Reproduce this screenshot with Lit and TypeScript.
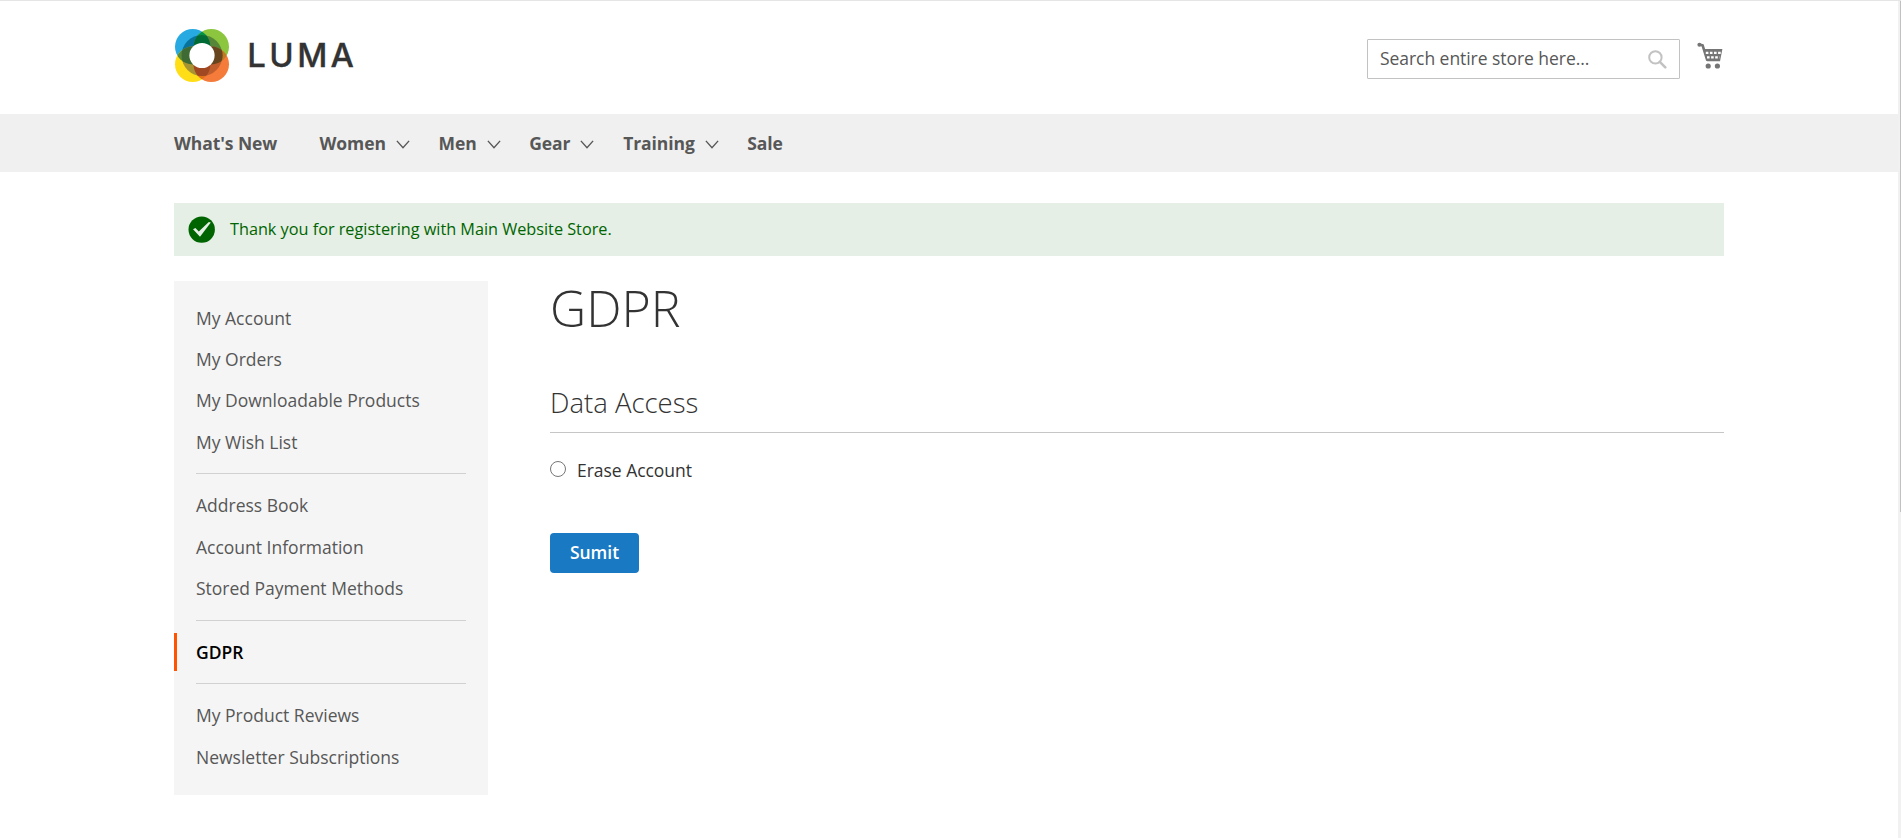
import { LitElement, html, css, svg } from "lit";
import { customElement } from "lit/decorators.js";

const NAV = [
  { label: "What's New", menu: false, width: 145.5 },
  { label: "Women", menu: true, width: 119 },
  { label: "Men", menu: true, width: 90.7 },
  { label: "Gear", menu: true, width: 94 },
  { label: "Training", menu: true, width: 124 },
  { label: "Sale", menu: false, width: 60 },
];

const ACCOUNT = [
  ["My Account", "My Orders", "My Downloadable Products", "My Wish List"],
  ["Address Book", "Account Information", "Stored Payment Methods"],
  ["GDPR"],
  ["My Product Reviews", "Newsletter Subscriptions"],
];

@customElement("app-root")
export class AppRoot extends LitElement {
  static styles = css`
    :host {
      display: block;
      position: relative;
      height: 838px;
      overflow: hidden;
      box-sizing: border-box;
      border-top: 1px solid #e5e5e5;
      background: #fff;
      color: #333;
      font: 400 17.5px/25px "Open Sans", "Noto Sans", sans-serif;
    }
    * { box-sizing: border-box; }
    ul { list-style: none; margin: 0; padding: 0; }
    .wrap { width: 1550px; margin-left: 174px; }
    .header { display: flex; height: 113px; }
    .logo { display: block; margin-top: 27px; }
    .wordmark { font: 500 33px "Inter", sans-serif; fill: #333; stroke: #333; stroke-width: 0.3px; }
    .tools { display: flex; margin-left: auto; }
    .search {
      display: flex; align-items: center; justify-content: space-between;
      width: 313px; height: 40px; margin-top: 38px; padding: 0 12px 0 12px;
      border: 1px solid #c2c2c2; border-radius: 1px; color: #575757;
    }
    .search span { margin-top: -2px; letter-spacing: -0.05px; }
    .cart { margin: 41px 0 0 17px; }
    .nav { height: 58px; background: #f0f0f0; }
    .links { display: flex; align-items: center; height: 58px; font-weight: 700; color: #575757; letter-spacing: -0.08px; }
    .link { display: flex; align-items: center; }
    .chev { margin: 2px 0 0 10px; }
    .message {
      display: flex; align-items: center; height: 53px; margin-top: 31px; padding-left: 14px;
      background: #e5efe5; color: #006400; font-size: 16.25px;
    }
    .message span { margin: -1px 0 0 15px; letter-spacing: -0.01px; }
    .columns { display: flex; gap: 62px; margin-top: 25px; align-items: flex-start; }
    .side { width: 314px; height: 514px; padding: 18.7px 0; background: #f5f5f5; color: #575757; }
    .item { height: 37.5px; padding: 6.25px 22px 6.25px 19px; border-left: 3px solid transparent; }
    .item + .item { margin-top: 3.75px; }
    .current { border-color: #ff5501; color: #000; font-weight: 600; }
    .rule { height: 1px; margin: 12.45px 22px 12.8px; background: #d1d1d1; }
    .main { flex: 1; }
    h1 { margin: 0; font-size: 50px; line-height: 55px; font-weight: 300; }
    h2 {
      margin: 48px 0 0; height: 49px; border-bottom: 1px solid #c6c6c6;
      font-size: 27.5px; line-height: 38px; font-weight: 300;
    }
    .choice { display: flex; margin-top: 25px; letter-spacing: -0.03px; }
    .choice input { width: 16px; height: 16px; margin: 3px 11px 0 0; }
    .btn {
      display: block; width: 89px; height: 40px; margin-top: 50px; padding: 0 0 2px; border: 0;
      border-radius: 4px; background: #1979c3; color: #fff;
      font: 600 17.5px/38px "Open Sans", sans-serif;
    }
    .track { position: absolute; right: 0; top: 0; width: 3px; height: 837px; background: #f1f1f1; }
    .thumb { width: 1px; height: 511px; margin-left: 2px; background: #c1c1c1; }
  `;

  private logo() {
    return html`<svg class="logo" width="190" height="56" viewBox="174 28 190 56" aria-label="LUMA">
      <defs>
        <clipPath id="tl"><circle cx="192.7" cy="46.7" r="17.7" /></clipPath>
        <clipPath id="br"><circle cx="211.3" cy="64.3" r="17.7" /></clipPath>
        <clipPath id="ring"><circle cx="202" cy="55.5" r="20.5" /></clipPath>
      </defs>
      ${this.petals("#27a9e1", "#8bc63e", "#ffde17", "#f47b39", "#009245", "#5a8a35", "#c07a20", "#e0701a")}
      <g clip-path="url(#ring)">
        ${this.petals("#07739b", "#568638", "#a89333", "#c15e2d", "#006b35", "#3d6b33", "#67451e", "#9f4822")}
      </g>
      <circle cx="202" cy="55.5" r="12.6" fill="#fff" />
      <text class="wordmark" y="66.8" x="247.2 269.2 297.2 330.4">LUMA</text>
    </svg>`;
  }

  private petals(tl: string, tr: string, bl: string, br: string, top: string, left: string, right: string, bottom: string) {
    return svg`
      <circle cx="192.7" cy="46.7" r="17.7" fill=${tl} />
      <circle cx="211.3" cy="46.7" r="17.7" fill=${tr} />
      <circle cx="192.7" cy="64.3" r="17.7" fill=${bl} />
      <circle cx="211.3" cy="64.3" r="17.7" fill=${br} />
      <g clip-path="url(#tl)">
        <circle cx="211.3" cy="46.7" r="17.7" fill=${top} />
        <circle cx="192.7" cy="64.3" r="17.7" fill=${left} />
      </g>
      <g clip-path="url(#br)">
        <circle cx="211.3" cy="46.7" r="17.7" fill=${right} />
        <circle cx="192.7" cy="64.3" r="17.7" fill=${bottom} />
      </g>`;
  }

  render() {
    return html`
      <header class="wrap header">
        ${this.logo()}
        <div class="tools">
          <div class="search">
            <span>Search entire store here...</span>
            <svg width="19" height="19" viewBox="0 0 19 19" fill="none" stroke="#c2c2c2">
              <circle cx="7.4" cy="7.4" r="6.2" stroke-width="2" />
              <path d="M11.8 11.8 17.3 17.3" stroke-width="2.6" stroke-linecap="round" />
            </svg>
          </div>
          <svg class="cart" width="27" height="28" viewBox="0 0 27 28" fill="none" stroke="#757575">
            <circle cx="2.4" cy="2.8" r="2" fill="#757575" stroke="none" />
            <path d="M2.4 2.6 5.6 3.4 10.4 18.6" stroke-width="2.6" />
            <path d="M6.4 7H25.4L23 19.3H10Z" fill="#757575" stroke="none" />
            <path d="M8.8 10.9H23.8M10 15.4H22.6" stroke="#fff" stroke-width="2.4" stroke-dasharray="2.6 1.5" />
            <circle cx="11.2" cy="24" r="2.6" fill="#757575" stroke="none" />
            <circle cx="20.4" cy="24" r="2.6" fill="#757575" stroke="none" />
          </svg>
        </div>
      </header>
      <nav class="nav">
        <div class="wrap links">
          ${NAV.map((n) => html`<div class="link" style="width:${n.width}px">
            ${n.label}
            ${n.menu ? html`<svg class="chev" width="15" height="9" viewBox="0 0 15 9" fill="none" stroke="#575757" stroke-width="1.4"><path d="M.9 .9 7 7.6 13.1 .9" /></svg>` : ""}
          </div>`)}
        </div>
      </nav>
      <div class="wrap">
        <div class="message">
          <svg width="27" height="27" viewBox="0 0 27 27">
            <circle cx="13.7" cy="13.6" r="13.2" fill="#006400" />
            <path d="M5 13.3 7.4 12 10.8 15.6 20.8 6 22.8 6.6 12 20.8Z" fill="#e5efe5" />
          </svg>
          <span>Thank you for registering with Main Website Store.</span>
        </div>
        <div class="columns">
          <aside class="side">
            ${ACCOUNT.map((group, i) => html`
              ${i ? html`<div class="rule"></div>` : ""}
              <ul>${group.map((t) => html`<li class="item ${t === "GDPR" ? "current" : ""}">${t}</li>`)}</ul>
            `)}
          </aside>
          <main class="main">
            <h1>GDPR</h1>
            <h2>Data Access</h2>
            <label class="choice"><input type="radio" />Erase Account</label>
            <button class="btn">Sumit</button>
          </main>
        </div>
      </div>
      <div class="track"><div class="thumb"></div></div>
    `;
  }
}
